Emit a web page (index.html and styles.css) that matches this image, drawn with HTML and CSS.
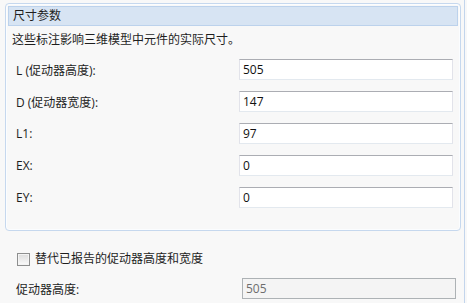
FILE: index.html
```html
<!DOCTYPE html>
<html>
  <head>
    <meta charset="UTF-8">
    <title>尺寸参数</title>
    <link rel="stylesheet" href="styles.css">
  </head>

  <body>
    <div class="panel">
      <div class="group">
        <div class="group__title">尺寸参数</div>
        <div class="group__desc">这些标注影响三维模型中元件的实际尺寸。</div>
        <div class="fields">
          <div class="field">
            <label>L (促动器高度):</label>
            <input type="text" value="505">
          </div>
          <div class="field">
            <label>D (促动器宽度):</label>
            <input type="text" value="147">
          </div>
          <div class="field">
            <label>L1:</label>
            <input type="text" value="97">
          </div>
          <div class="field">
            <label>EX:</label>
            <input type="text" value="0">
          </div>
          <div class="field">
            <label>EY:</label>
            <input type="text" value="0">
          </div>
        </div>
      </div>

      <div class="override">
        <span class="check"></span>
        <span>替代已报告的促动器高度和宽度</span>
      </div>
      <div class="field field--off">
        <label>促动器高度:</label>
        <input type="text" value="505" disabled>
      </div>
    </div>
  </body>
</html>
```

FILE: styles.css
```css
* {
  font-family: "Open Sans", "Noto Sans CJK SC", sans-serif;
  box-sizing: border-box;
}
html, body {
  margin: 0;
  padding: 0;
  width: 100%;
  height: 100%;
  background: #f8f8f8;
  color: #1e1e1e;
  font-size: 12px;
}

.panel {
  width: 465px;
  height: 303px;
  padding: 3px 0 0 5px;
  border-right: 1px solid #c3d5ec;
}

.group {
  width: 456px;
  padding: 2px 2px 22px 2px;
  border: 1px solid #c6d8ee;
  border-radius: 4px;
  box-shadow: inset 0 0 0 1px #fbfdff;
}
.group__title {
  height: 20px;
  line-height: 18px;
  padding-left: 4px;
  background: #d7e4f3;
  border: 1px solid #bcd2ec;
}
.group__desc {
  margin-top: 6px;
  padding-left: 4px;
  line-height: 16px;
}

.fields {
  display: flex;
  flex-direction: column;
  gap: 11px;
  margin-top: 11px;
}
.field {
  display: flex;
  align-items: center;
  padding-left: 8px;
}
.field label {
  width: 223px;
}
.field input {
  width: 214px;
  height: 21px;
  padding: 0 0 0 3px;
  border: 1px solid #e2e3ea;
  border-top-color: #abadb3;
  border-bottom-color: #e3e9ef;
  background: #fff;
  color: #111;
  font-size: 12px;
  outline: none;
}

.override {
  display: flex;
  align-items: center;
  gap: 5px;
  margin: 20px 0 0 12px;
  line-height: 16px;
}
.check {
  width: 13px;
  height: 13px;
  border: 1px solid #8e8f8f;
  background: linear-gradient(#dcdcdc, #fbfbfb);
  box-shadow: inset 0 0 0 1px #f4f4f4;
}

.field--off {
  margin-top: 11px;
  padding-left: 11px;
}
.field--off label {
  width: 226px;
}
.field--off input {
  border-color: #adb2b5;
  background: #f4f4f4;
  color: #6d6d6d;
}
```
